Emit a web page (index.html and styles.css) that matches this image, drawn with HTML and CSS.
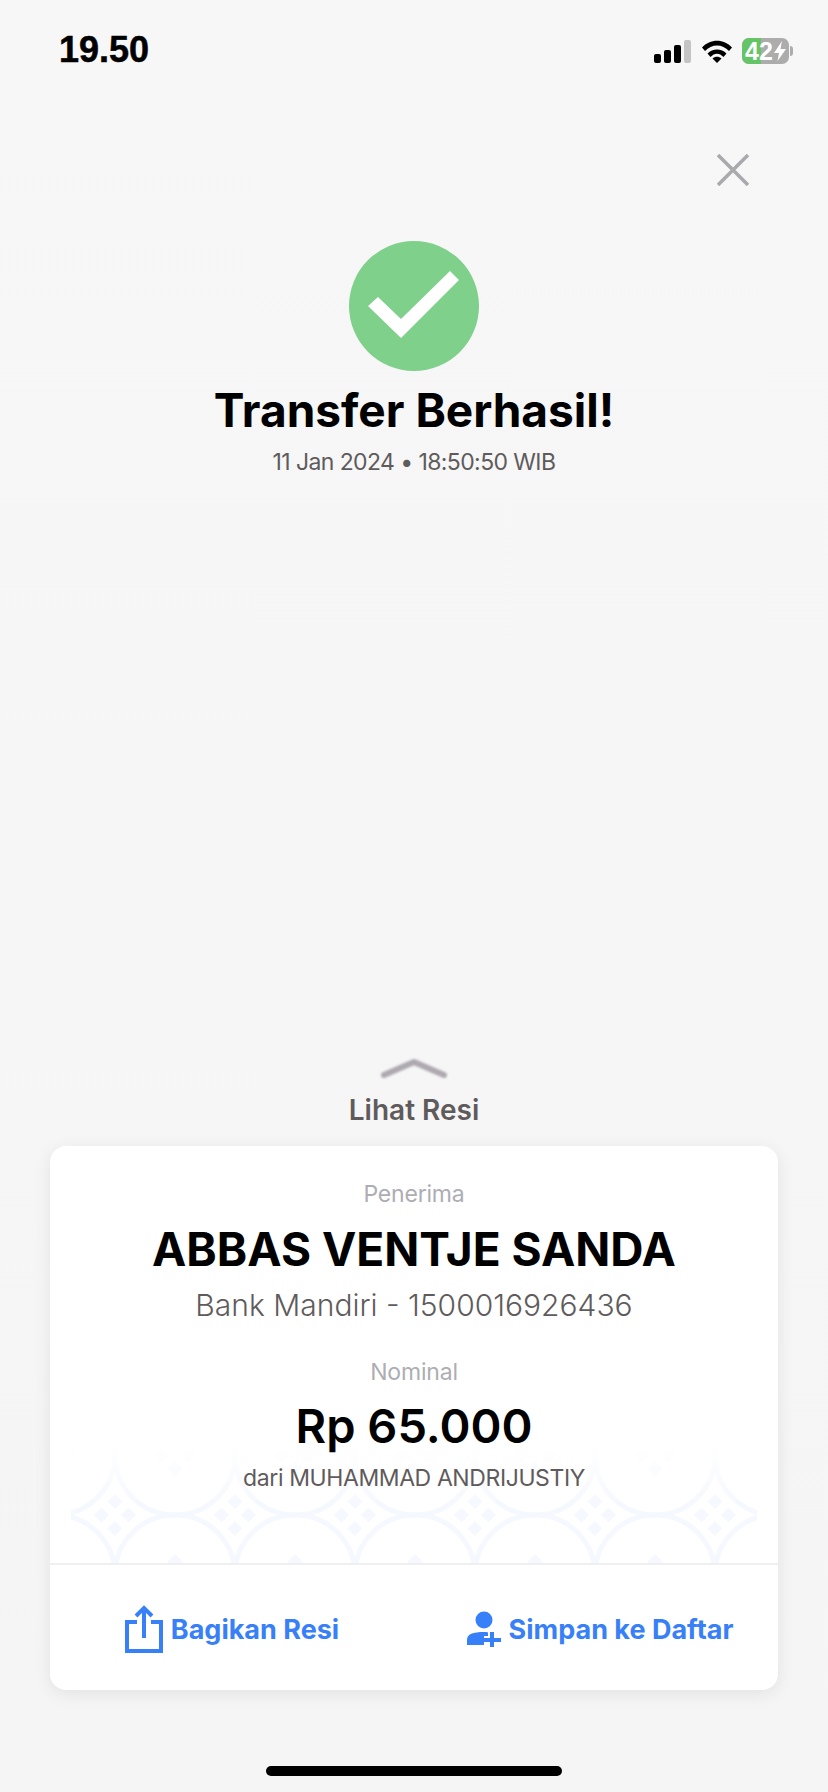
FILE: index.html
```html
<!DOCTYPE html>
<html lang="id">
<head>
  <meta charset="UTF-8">
  <meta name="viewport" content="width=device-width, initial-scale=1.0">
  <title>Transfer Berhasil</title>
  <link rel="stylesheet" href="styles.css">
</head>
<body>
  <header class="status-bar">
    <span class="clock">19.50</span>
    <div class="status-icons">
      <div class="signal">
        <span class="bar bar-1"></span>
        <span class="bar bar-2"></span>
        <span class="bar bar-3"></span>
        <span class="bar bar-4"></span>
      </div>
      <svg class="wifi" viewBox="0 0 30 23" width="30" height="23">
        <path d="M0 7.500C8-1.500 22-1.500 30 7.500L27 11C20.500 3.500 9.500 3.500 3 11Z"/>
        <path d="M5.500 13.500C10.500 8 19.500 8 24.500 13.500L21.500 17C17.500 12.500 12.500 12.500 8.500 17Z"/>
        <path d="M10.500 18.500C13 16 17 16 19.500 18.500L15 23Z"/>
      </svg>
      <div class="battery">
        <span class="battery-level"></span>
        <span class="battery-text">42</span>
        <svg class="bolt" viewBox="0 0 12 20" width="12" height="20">
          <path d="M8 0L0 12H5L3.500 20L12 8H6.500Z"/>
        </svg>
      </div>
      <span class="battery-nub"></span>
    </div>
  </header>

  <div class="close-row">
    <svg class="close" viewBox="0 0 32 32" width="32" height="32">
      <path d="M1 1L31 31M31 1L1 31"/>
    </svg>
  </div>

  <section class="result">
    <svg class="check" viewBox="0 0 130 130" width="130" height="130">
      <circle cx="65" cy="65" r="65" fill="#7ed08b"/>
      <polygon points="19,65 29,56 52,78 101,30 110,39 52,97" fill="#fff"/>
    </svg>
    <h1>Transfer Berhasil!</h1>
    <p class="date">11 Jan 2024 • 18:50:50 WIB</p>
  </section>

  <div class="receipt-toggle">
    <svg class="chevron" viewBox="0 0 66 20" width="66" height="20">
      <path d="M3 17L33 4L63 17"/>
    </svg>
    <span>Lihat Resi</span>
  </div>

  <main class="card">
    <div class="details">
      <svg class="motif" width="686" height="118">
        <defs>
          <linearGradient id="fade" x1="0" y1="0" x2="0" y2="1">
            <stop offset="0" stop-color="#fff" stop-opacity="0"/>
            <stop offset="0.5" stop-color="#fff" stop-opacity="1"/>
          </linearGradient>
          <mask id="fade-mask">
            <rect width="686" height="118" fill="url(#fade)"/>
          </mask>
          <path id="cluster" d="M0-21l7.500 7.500l-7.500 7.500l-7.500-7.500ZM0 6l7.500 7.500l-7.500 7.500l-7.500-7.500ZM-13.500-7.500l7.500 7.500l-7.500 7.500l-7.500-7.500ZM13.500-7.500l7.500 7.500l-7.500 7.500l-7.500-7.500Z"/>
          <pattern id="kawung" width="120" height="120" x="-16" y="10" patternUnits="userSpaceOnUse">
            <circle class="ring" cx="0" cy="0" r="60"/>
            <circle class="ring" cx="120" cy="0" r="60"/>
            <circle class="ring" cx="0" cy="120" r="60"/>
            <circle class="ring" cx="120" cy="120" r="60"/>
            <use href="#cluster" x="60" y="60"/>
            <use href="#cluster" x="0" y="0"/>
            <use href="#cluster" x="120" y="0"/>
            <use href="#cluster" x="0" y="120"/>
            <use href="#cluster" x="120" y="120"/>
          </pattern>
        </defs>
        <rect width="686" height="118" fill="url(#kawung)" mask="url(#fade-mask)"/>
      </svg>
      <p class="label">Penerima</p>
      <p class="name">ABBAS VENTJE SANDA</p>
      <p class="account">Bank Mandiri - 1500016926436</p>
      <p class="label label-nominal">Nominal</p>
      <p class="amount">Rp 65.000</p>
      <p class="sender">dari MUHAMMAD ANDRIJUSTIY</p>
    </div>
    <div class="actions">
      <div class="action">
        <svg class="icon-share" viewBox="0 0 38 48" width="38" height="48">
          <path class="outline" d="M12 17H2V46H36V17H26"/>
          <path class="outline" d="M19 33V3M11 11L19 3L27 11"/>
        </svg>
        <span>Bagikan Resi</span>
      </div>
      <div class="action action-save">
        <svg class="icon-add" viewBox="0 0 34 36" width="34" height="36">
          <circle cx="17" cy="9" r="8.500"/>
          <path d="M0 34V29C0 23 6 21 17 21C19 21 20 21 21 21.500V25H17V34Z"/>
          <path d="M23 21H27V27H34V31H27V36H23V31H17V27H23Z"/>
        </svg>
        <span>Simpan ke Daftar</span>
      </div>
    </div>
  </main>

  <div class="home-indicator"></div>
</body>
</html>
```

FILE: styles.css
```css
* {
  box-sizing: border-box;
}

body {
  margin: 0;
  height: 1792px;
  overflow: hidden;
  display: flex;
  flex-direction: column;
  font-family: Inter, 'Noto Sans', sans-serif;
  background: linear-gradient(#f7f7f7, #f5f5f5);
  color: #000;
}

p,
h1 {
  margin: 0;
}

.status-bar {
  height: 100px;
  padding: 32px 35px 0 59px;
  display: flex;
  justify-content: space-between;
  align-items: flex-start;
}

.clock {
  font-family: 'Liberation Sans', Arial, sans-serif;
  font-weight: bold;
  font-size: 36px;
  line-height: 36px;
  -webkit-text-stroke: 0.5px #000;
}

.status-icons {
  display: flex;
  align-items: center;
  height: 30px;
  margin-top: 4px;
}

.signal {
  display: flex;
  align-items: flex-end;
  gap: 3px;
  height: 24px;
  margin-right: 11px;
}

.bar {
  width: 7px;
  background: #000;
  border-radius: 2px;
}

.bar-1 {
  height: 9px;
}

.bar-2 {
  height: 13px;
}

.bar-3 {
  height: 18px;
}

.bar-4 {
  height: 23px;
  background: #c4c4c4;
}

.wifi {
  fill: #000;
  margin-right: 10px;
}

.battery {
  position: relative;
  width: 47px;
  height: 26px;
  display: flex;
  align-items: center;
  padding-left: 3px;
  background: #acacac;
  border-radius: 7px;
  color: #fff;
}

.battery-level {
  position: absolute;
  left: 0;
  top: 0;
  bottom: 0;
  width: 19px;
  background: #64c466;
  border-radius: 7px 0 0 7px;
}

.battery-text {
  position: relative;
  font-family: 'Liberation Sans', Arial, sans-serif;
  font-weight: bold;
  font-size: 25px;
  line-height: 26px;
}

.bolt {
  position: relative;
  fill: #fff;
  margin-left: 1px;
}

.battery-nub {
  width: 3px;
  height: 10px;
  margin-left: 1px;
  background: #acacac;
  border-radius: 0 3px 3px 0;
}

.close-row {
  display: flex;
  justify-content: flex-end;
  padding: 54px 79px 0 0;
}

.close {
  fill: none;
  stroke: #a9a9ae;
  stroke-width: 3.500;
}

.result {
  margin-top: 55px;
  display: flex;
  flex-direction: column;
  align-items: center;
}

.result h1 {
  margin-top: 12px;
  font-size: 46px;
  line-height: 54px;
  font-weight: 700;
}

.date {
  margin-top: 10px;
  font-size: 23px;
  line-height: 30px;
  letter-spacing: -0.6px;
  color: #5f5b5c;
}

.receipt-toggle {
  margin-top: auto;
  display: flex;
  flex-direction: column;
  align-items: center;
  font-size: 28px;
  font-weight: 600;
  line-height: 32px;
  color: #5f5b5c;
}

.chevron {
  fill: none;
  stroke: #aea8b0;
  stroke-width: 6;
  stroke-linecap: round;
  stroke-linejoin: round;
  filter: blur(1px);
  margin-bottom: 16px;
}

.card {
  margin: 20px 50px 0;
  height: 544px;
  display: flex;
  flex-direction: column;
  background: #fff;
  border-radius: 16px;
  box-shadow: 0 4px 18px rgba(0, 0, 0, 0.08);
  text-align: center;
}

.details {
  position: relative;
  height: 419px;
  padding-top: 33px;
  border-bottom: 2px solid #efeff1;
}

.motif {
  position: absolute;
  left: 21px;
  bottom: 0;
}

.motif .ring {
  fill: none;
  stroke: #f5f8fe;
  stroke-width: 5;
}

.motif use {
  fill: #f5f8fe;
}

.details p {
  position: relative;
}

.label {
  font-size: 23px;
  line-height: 30px;
  letter-spacing: -0.2px;
  color: #adadb3;
}

.label-nominal {
  margin-top: 33px;
}

.name {
  margin-top: 13px;
  font-size: 46px;
  line-height: 54px;
  font-weight: 700;
}

.account {
  margin-top: 10px;
  font-size: 30px;
  line-height: 38px;
  font-weight: 300;
  color: #5f5b5c;
}

.amount {
  margin-top: 12px;
  font-size: 47px;
  line-height: 54px;
  font-weight: 600;
}

.sender {
  margin-top: 10px;
  font-size: 23px;
  line-height: 30px;
  letter-spacing: -0.4px;
  color: #5f5b5c;
}

.actions {
  flex: 1;
  display: grid;
  grid-template-columns: 1fr 1fr;
  align-items: center;
  padding-top: 3px;
}

.action {
  display: flex;
  align-items: center;
  justify-content: center;
  gap: 8px;
  font-size: 27px;
  font-weight: 700;
  color: #3880f7;
}

.action-save {
  padding-left: 8px;
}

.action svg {
  flex-shrink: 0;
}

.icon-add {
  fill: #3880f7;
}

.outline {
  fill: none;
  stroke: #3880f7;
  stroke-width: 4;
}

.home-indicator {
  width: 296px;
  height: 10px;
  margin: 76px auto 16px;
  background: #000;
  border-radius: 5px;
}
```
